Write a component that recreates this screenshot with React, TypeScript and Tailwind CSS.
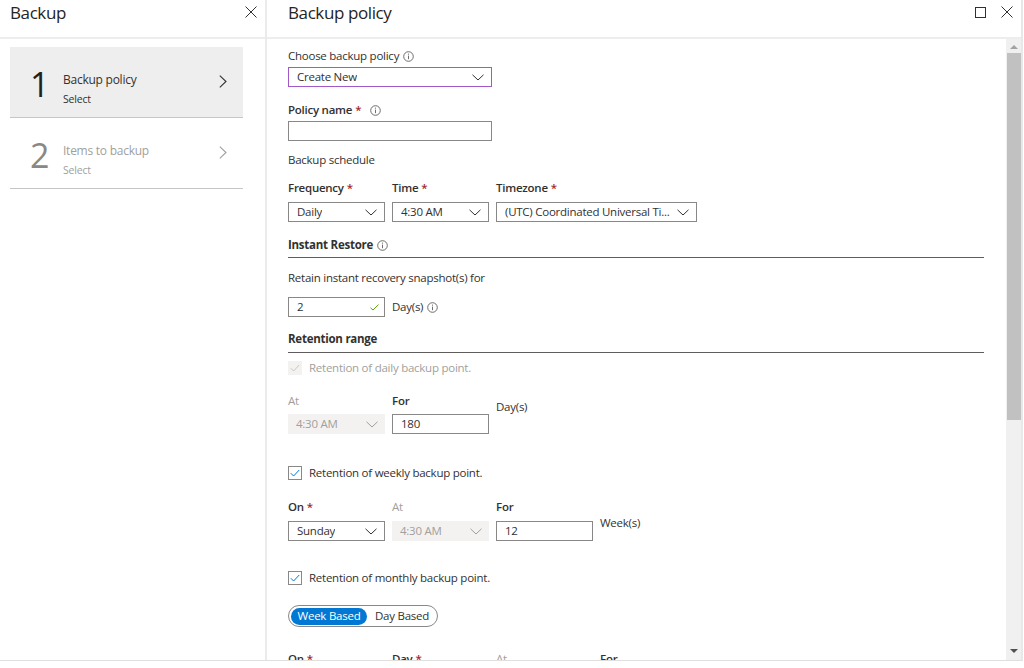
import React from "react";

const Chevron = ({ color = "#323130" }: { color?: string }) => (
  <svg width="12" height="7" viewBox="0 0 12 7" fill="none">
    <path d="M0.5 0.8 L6 6 L11.5 0.8" stroke={color} strokeWidth="1" />
  </svg>
);

const Info = () => (
  <svg width="11" height="11" viewBox="0 0 11 11" fill="none">
    <circle cx="5.5" cy="5.5" r="4.8" stroke="#605e5c" strokeWidth="0.9" />
    <line x1="5.5" y1="4.6" x2="5.5" y2="8.2" stroke="#605e5c" strokeWidth="0.9" />
    <circle cx="5.5" cy="3.1" r="0.6" fill="#605e5c" />
  </svg>
);

const Close = () => (
  <svg width="12" height="12" viewBox="0 0 12 12" fill="none">
    <path d="M0.5 0.5 L11.5 11.5 M11.5 0.5 L0.5 11.5" stroke="#323130" strokeWidth="1" />
  </svg>
);

const Req = () => <span className="text-[#a4262c] ml-[3px]">*</span>;

const Select = ({ value, w, disabled, focus }: { value: string; w: string; disabled?: boolean; focus?: boolean }) => (
  <div
    className={`${w} h-[20px] flex items-center justify-between pl-[8px] pr-[7px] ${
      disabled
        ? "bg-[#f3f2f1] text-[#a19f9d]"
        : focus
        ? "border border-[#a259c7] bg-white"
        : "border border-[#8a8886] bg-white"
    }`}
  >
    <span className="whitespace-nowrap overflow-hidden">{value}</span>
    <span className="shrink-0 flex">
      <Chevron color={disabled ? "#a19f9d" : "#323130"} />
    </span>
  </div>
);

const Input = ({ value, w, check }: { value?: string; w: string; check?: boolean }) => (
  <div className={`${w} h-[20px] border border-[#8a8886] bg-white flex items-center justify-between pl-[8px] pr-[5px]`}>
    <span>{value}</span>
    {check && (
      <svg width="9" height="7" viewBox="0 0 9 7" fill="none">
        <path d="M0.5 3.8 L3 6 L8.5 0.6" stroke="#57a300" strokeWidth="1" />
      </svg>
    )}
  </div>
);

const Checkbox = ({ disabled }: { disabled?: boolean }) => (
  <div
    className={`w-[14px] h-[14px] shrink-0 flex items-center justify-center ${
      disabled ? "bg-[#f3f2f1]" : "border border-[#8a8886] bg-white"
    }`}
  >
    <svg width="10" height="8" viewBox="0 0 10 8" fill="none">
      <path d="M0.8 4.2 L3.6 7 L9.2 1" stroke={disabled ? "#c8c6c4" : "#0078d4"} strokeWidth="1" />
    </svg>
  </div>
);

const StepChevron = ({ color }: { color: string }) => (
  <svg width="8" height="13" viewBox="0 0 8 13" fill="none">
    <path d="M0.8 0.6 L7 6.5 L0.8 12.4" stroke={color} strokeWidth="1.1" />
  </svg>
);

export default function App() {
  return (
    <div className="w-[1024px] h-[668px] bg-white text-[#323130] font-['Segoe_UI','Open_Sans',sans-serif] text-[11.5px] tracking-[-0.25px] leading-[16px] overflow-hidden">
      <div className="w-[1023px] h-[661px] flex border-b border-[#e1dfdd] border-r-2 border-r-[#e8e8e8]">
        {/* Left blade */}
        <aside className="w-[267px] shrink-0 border-r-2 border-[#ebebeb] flex flex-col">
          <div className="h-[39px] shrink-0 border-b-2 border-[#ededed] flex items-start justify-between pl-[10px] pr-[8px]">
            <div className="text-[17px] tracking-[-0.4px] leading-[24px] mt-[1px] font-medium text-[#252423]">Backup</div>
            <div className="mt-[6px]">
              <Close />
            </div>
          </div>
          <div className="px-[10px] pt-[8px] w-[253px]">
            <div className="h-[71px] bg-[#eeeeee] border-b border-[#c8c6c4] flex pl-[20px] pr-[16px]">
              <div className="w-[33px] text-[34px] tracking-normal leading-none self-center mt-[4px] text-[#201f1e]">1</div>
              <div className="flex-1 pt-[24px]">
                <div className="text-[12px] leading-[18px]">Backup policy</div>
                <div className="text-[10.5px] tracking-[-0.2px] leading-[14px] mt-[3px]">Select</div>
              </div>
              <div className="self-center mt-[-2px]">
                <StepChevron color="#323130" />
              </div>
            </div>
            <div className="h-[71px] border-b border-[#c8c6c4] flex pl-[20px] pr-[16px]">
              <div className="w-[33px] text-[34px] tracking-normal leading-none self-center mt-[4px] text-[#8a8886]">2</div>
              <div className="flex-1 pt-[24px] text-[#a19f9d]">
                <div className="text-[12px] leading-[18px]">Items to backup</div>
                <div className="text-[10.5px] tracking-[-0.2px] leading-[14px] mt-[3px]">Select</div>
              </div>
              <div className="self-center mt-[-2px]">
                <StepChevron color="#a19f9d" />
              </div>
            </div>
          </div>
        </aside>

        {/* Right blade */}
        <main className="flex-1 flex flex-col min-w-0">
          <div className="h-[39px] shrink-0 border-b-2 border-[#ededed] flex items-start justify-between pl-[21px] pr-[8px]">
            <div className="text-[17px] tracking-[-0.4px] leading-[24px] mt-[1px] font-medium text-[#252423]">Backup policy</div>
            <div className="flex items-center gap-[15px] mt-[6px]">
              <div className="w-[11px] h-[11px] border border-[#323130]" />
              <Close />
            </div>
          </div>
          <div className="flex flex-1 min-h-0">
            <div className="flex-1 overflow-hidden pl-[21px] pr-[22px] pt-[9px]">
              <div className="flex items-center gap-[4px]">
                <span>Choose backup policy</span>
                <Info />
              </div>
              <div className="mt-[3px]">
                <Select value="Create New" w="w-[204px]" focus />
              </div>

              <div className="mt-[15px] flex items-center font-semibold">
                <span>Policy name</span>
                <Req />
                <span className="ml-[9px] flex">
                  <Info />
                </span>
              </div>
              <div className="mt-[3px]">
                <Input w="w-[204px]" />
              </div>

              <div className="mt-[11px]">Backup schedule</div>

              <div className="mt-[12px] flex gap-[7px]">
                <div className="w-[97px]">
                  <div className="font-semibold">
                    Frequency<Req />
                  </div>
                  <div className="mt-[6px]">
                    <Select value="Daily" w="w-[97px]" />
                  </div>
                </div>
                <div className="w-[97px]">
                  <div className="font-semibold">
                    Time<Req />
                  </div>
                  <div className="mt-[6px]">
                    <Select value="4:30 AM" w="w-[97px]" />
                  </div>
                </div>
                <div className="w-[201px]">
                  <div className="font-semibold">
                    Timezone<Req />
                  </div>
                  <div className="mt-[6px]">
                    <Select value="(UTC) Coordinated Universal Ti..." w="w-[201px]" />
                  </div>
                </div>
              </div>

              <div className="mt-[15px] flex items-center gap-[4px] font-bold">
                <span>Instant Restore</span>
                <Info />
              </div>
              <div className="mt-[4px] h-px bg-[#605e5c]" />

              <div className="mt-[12px]">Retain instant recovery snapshot(s) for</div>
              <div className="mt-[11px] flex items-center gap-[7px]">
                <Input value="2" w="w-[97px]" check />
                <span className="flex items-center gap-[4px]">
                  Day(s) <Info />
                </span>
              </div>

              <div className="mt-[14px] font-bold">Retention range</div>
              <div className="mt-[5px] h-px bg-[#605e5c]" />

              <div className="mt-[7px] flex items-center gap-[7px] text-[#a19f9d]">
                <Checkbox disabled />
                <span>Retention of daily backup point.</span>
              </div>

              <div className="mt-[17px] flex gap-[7px]">
                <div className="w-[97px]">
                  <div className="text-[#a19f9d]">At</div>
                  <div className="mt-[5px]">
                    <Select value="4:30 AM" w="w-[97px]" disabled />
                  </div>
                </div>
                <div className="w-[97px]">
                  <div className="font-semibold">For</div>
                  <div className="mt-[5px]">
                    <Input value="180" w="w-[97px]" />
                  </div>
                </div>
                <div className="mt-[6px]">Day(s)</div>
              </div>

              <div className="mt-[31px] flex items-center gap-[7px]">
                <Checkbox />
                <span>Retention of weekly backup point.</span>
              </div>

              <div className="mt-[18px] flex gap-[7px]">
                <div className="w-[97px]">
                  <div className="font-semibold">
                    On<Req />
                  </div>
                  <div className="mt-[6px]">
                    <Select value="Sunday" w="w-[97px]" />
                  </div>
                </div>
                <div className="w-[97px]">
                  <div className="text-[#a19f9d]">At</div>
                  <div className="mt-[6px]">
                    <Select value="4:30 AM" w="w-[97px]" disabled />
                  </div>
                </div>
                <div className="w-[97px]">
                  <div className="font-semibold">For</div>
                  <div className="mt-[6px]">
                    <Input value="12" w="w-[97px]" />
                  </div>
                </div>
                <div className="mt-[16px]">Week(s)</div>
              </div>

              <div className="mt-[29px] flex items-center gap-[7px]">
                <Checkbox />
                <span>Retention of monthly backup point.</span>
              </div>

              <div className="mt-[19px] w-[150px] h-[22px] rounded-full border border-[#8a8886] flex items-center p-[2px] whitespace-nowrap">
                <div className="h-[17px] w-[76px] rounded-full bg-[#0078d4] text-white flex items-center justify-center">Week Based</div>
                <div className="pl-[8px]">Day Based</div>
              </div>

              <div className="mt-[24px] flex gap-[7px]">
                <div className="w-[97px] font-semibold">
                  On<Req />
                </div>
                <div className="w-[97px] font-semibold">
                  Day<Req />
                </div>
                <div className="w-[97px] text-[#a19f9d]">At</div>
                <div className="w-[97px] font-semibold">For</div>
              </div>
            </div>

            {/* scrollbar drawing */}
            <div className="w-[15px] shrink-0 bg-[#f0f0f0] flex flex-col items-stretch pb-[2px]">
              <div className="h-[14px] flex items-center justify-center pt-[1px]">
                <div className="w-0 h-0 border-l-[4px] border-r-[4px] border-b-[4px] border-l-transparent border-r-transparent border-b-[#a3a3a3]" />
              </div>
              <div className="h-[367px] bg-[#c1c1c1] ml-[1px]" />
              <div className="flex-1" />
              <div className="h-[14px] flex items-center justify-center">
                <div className="w-0 h-0 border-l-[4px] border-r-[4px] border-t-[4px] border-l-transparent border-r-transparent border-t-[#505050]" />
              </div>
            </div>
          </div>
        </main>
      </div>
    </div>
  );
}
